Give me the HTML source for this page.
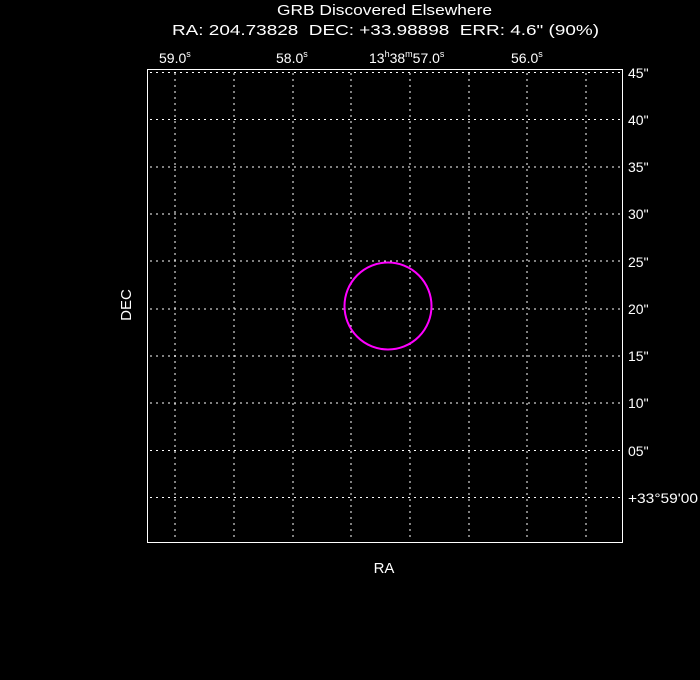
<!DOCTYPE html>
<html><head><style>
html,body{margin:0;padding:0;background:#000;}
svg{display:block}
text{font-family:"Liberation Sans","DejaVu Sans",sans-serif;fill:#fff;white-space:pre;}
</style></head><body>
<svg width="700" height="680" viewBox="0 0 700 680" xmlns="http://www.w3.org/2000/svg">
<rect width="700" height="680" fill="#000"/>
<text x="277" y="15" font-size="15" textLength="215" lengthAdjust="spacingAndGlyphs">GRB Discovered Elsewhere</text>
<text x="172" y="35" font-size="15" textLength="427" lengthAdjust="spacingAndGlyphs" xml:space="preserve">RA: 204.73828  DEC: +33.98898  ERR: 4.6" (90%)</text>
<g font-size="14">
<text x="159" y="63">59.0<tspan font-size="9" dy="-6">s</tspan></text>
<text x="276" y="63">58.0<tspan font-size="9" dy="-6">s</tspan></text>
<text x="369" y="63">13<tspan font-size="9" dy="-6">h</tspan><tspan dy="6">38</tspan><tspan font-size="9" dy="-6">m</tspan><tspan dy="6">57.0</tspan><tspan font-size="9" dy="-6">s</tspan></text>
<text x="511" y="63">56.0<tspan font-size="9" dy="-6">s</tspan></text>
<text x="628" y="78">45"</text>
<text x="628" y="125">40"</text>
<text x="628" y="172">35"</text>
<text x="628" y="219">30"</text>
<text x="628" y="267">25"</text>
<text x="628" y="314">20"</text>
<text x="628" y="361">15"</text>
<text x="628" y="408">10"</text>
<text x="628" y="456">05"</text>
<text x="628" y="503" textLength="70" lengthAdjust="spacingAndGlyphs">+33°59'00</text>
</g>
<text x="131" y="305" font-size="15" text-anchor="middle" transform="rotate(-90 131 305)">DEC</text>
<text x="384" y="573" font-size="15" text-anchor="middle">RA</text>
<g stroke="#fff" stroke-width="1" stroke-dasharray="2,4" fill="none">
<path d="M175 73V540M234 73V540M293 73V540M351 73V540M410 73V540M469 73V540M527 73V540M586 73V540"/>
<path d="M150 72.5H620M150 119.5H620M150 167H620M150 214H620M150 261H620M150 309H620M150 356H620M150 403H620M150 450.5H620M150 497.5H620"/>
</g>
<rect x="147.5" y="69.5" width="475" height="473" fill="none" stroke="#fff" stroke-width="1"/>
<circle cx="388" cy="306" r="43.5" fill="none" stroke="#ff00ff" stroke-width="2"/>
</svg>
</body></html>
